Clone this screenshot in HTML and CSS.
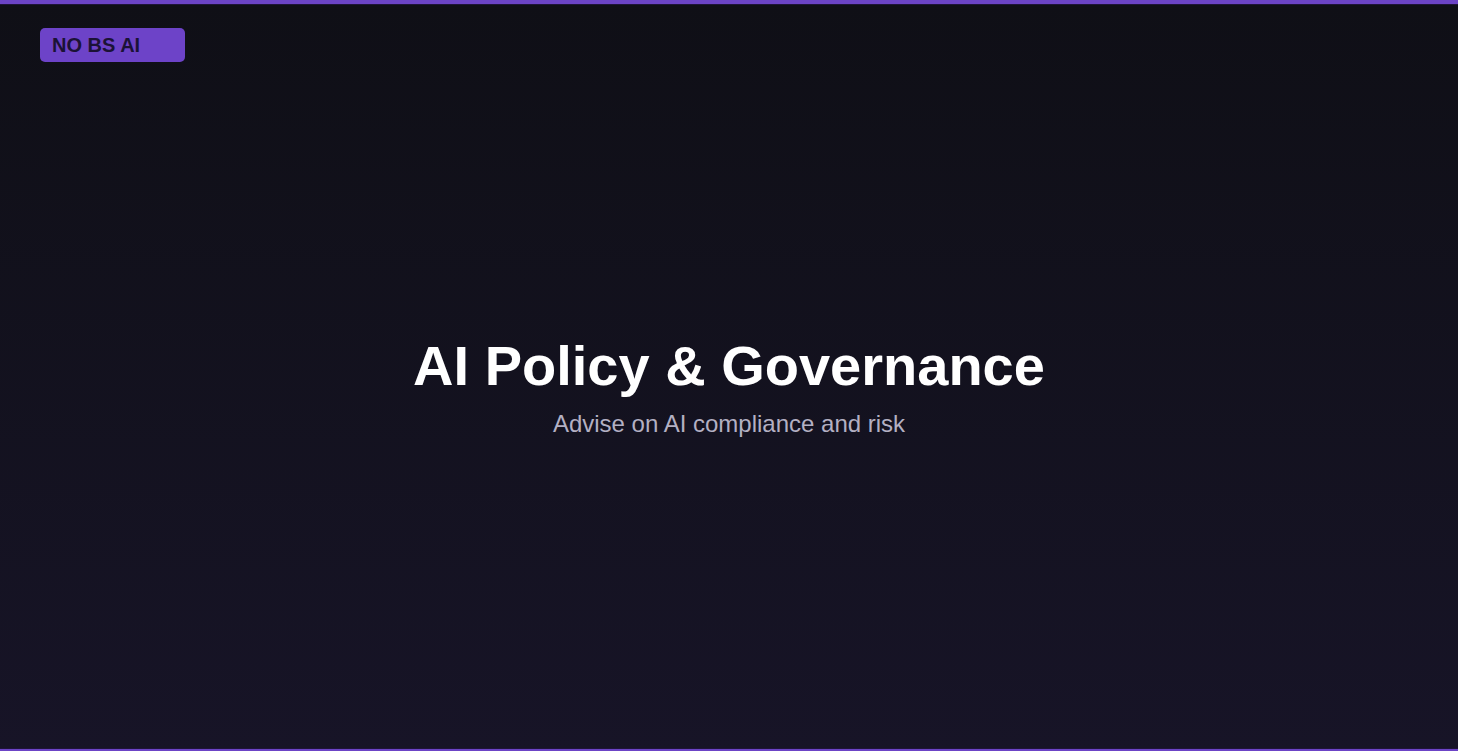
FILE: index.html
```html
<!DOCTYPE html>
<html lang="en">
<head>
    <meta charset="UTF-8">
    <meta name="viewport" content="width=device-width, initial-scale=1.0">
    <title>AI Policy &amp; Governance - NO BS AI</title>
    <link rel="stylesheet" href="styles.css">
</head>
<body>
    <header class="site-header">
        <a class="logo" href="#">NO BS AI</a>
    </header>
    <main class="hero">
        <h1 class="hero-title">AI Policy &amp; Governance</h1>
        <p class="hero-sub">Advise on AI compliance and risk</p>
    </main>
</body>
</html>
```

FILE: styles.css
```css
html, body {
    margin: 0;
    height: 100%;
}
body {
    box-sizing: border-box;
    min-height: 100vh;
    display: flex;
    flex-direction: column;
    font-family: "Liberation Sans", Arial, sans-serif;
    color: #ffffff;
    background: linear-gradient(180deg, #0f0f16 0%, #171427 100%);
    border-top: 4px solid #6c44c6;
    border-bottom: 2px solid #6c44c6;
    box-shadow: inset 0 1px 0 #1f1439, inset 0 -1px 0 #1f1439;
}
.site-header {
    padding: 24px 40px;
}
.logo {
    display: block;
    box-sizing: border-box;
    width: 145px;
    height: 34px;
    padding: 0 12px;
    line-height: 34px;
    font-size: 20px;
    font-weight: bold;
    color: #1b1236;
    text-decoration: none;
    background-color: #6d43c8;
    border-radius: 5px;
}
.hero {
    flex: 1;
    display: flex;
    flex-direction: column;
    align-items: center;
    justify-content: center;
    padding-bottom: 60px;
    text-align: center;
}
.hero-title {
    margin: 0;
    font-size: 56px;
    line-height: 1.1;
    font-weight: bold;
}
.hero-sub {
    margin: 10px 0 0;
    font-size: 24px;
    line-height: 1.4;
    color: #b3b0c3;
}
```
